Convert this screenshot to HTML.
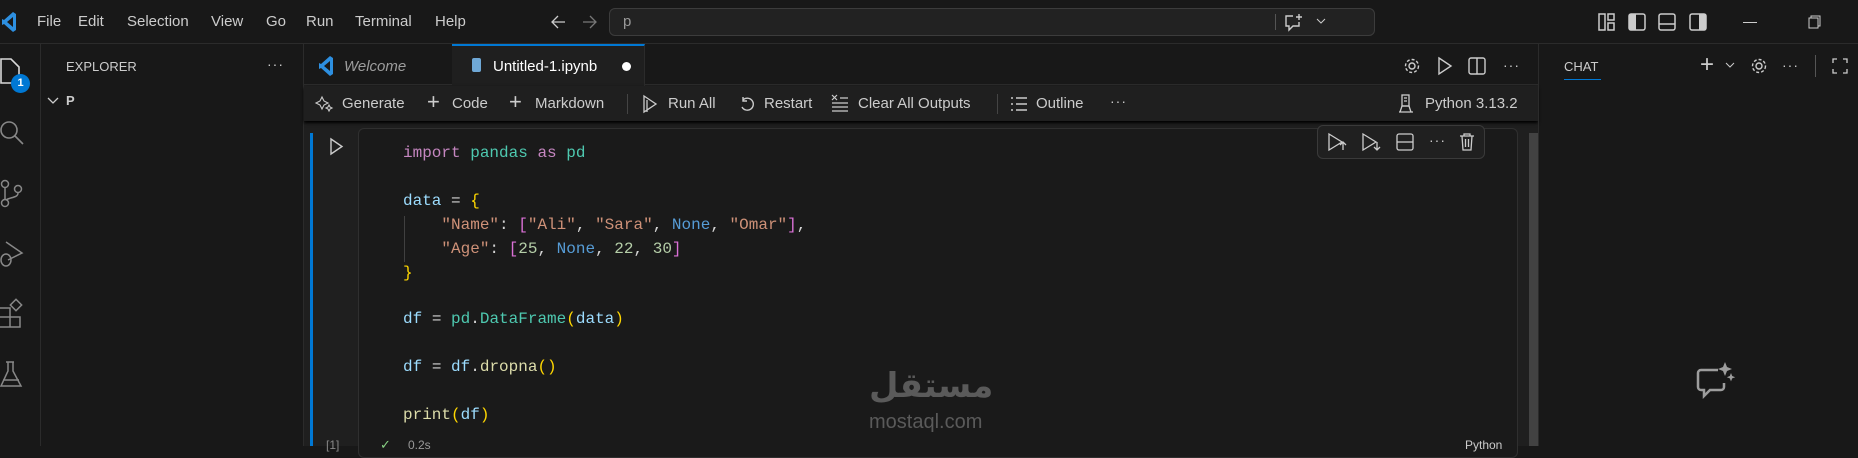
<!DOCTYPE html>
<html><head><meta charset="utf-8">
<style>
*{margin:0;padding:0;box-sizing:border-box}
body{width:1858px;height:446px;overflow:hidden;background:#181818;font-family:"Liberation Sans",sans-serif;color:#ccc;position:relative}
.a{position:absolute;white-space:nowrap}
.ui{font-size:15px;color:#cccccc}
svg{position:absolute;overflow:visible}
.code{font-family:"Liberation Mono",monospace;font-size:16px;color:#9cdcfe;white-space:pre}
.k{color:#c586c0}.m{color:#4ec9b0}.s{color:#ce9178}.n{color:#569cd6}.y{color:#ffd700}.p{color:#da70d6}.f{color:#dcdcaa}.w{color:#d4d4d4}.g{color:#b5cea8}
</style></head><body>
<!-- title bar -->
<div class="a" style="left:0;top:0;width:1858px;height:44px;background:#181818;border-bottom:1px solid #2b2b2b"></div>
<svg style="left:2px;top:12px" width="14" height="20" viewBox="0 0 14 20"><path d="M11 0 L14 2 V18 L11 20 L2 12 L0 13 V7 L2 8 Z M11 5 L5 10 L11 15Z" fill="#2d8fe0"/></svg>
<div class="a ui" style="left:37px;top:13px">File</div>
<div class="a ui" style="left:78px;top:13px">Edit</div>
<div class="a ui" style="left:127px;top:13px">Selection</div>
<div class="a ui" style="left:211px;top:13px">View</div>
<div class="a ui" style="left:266px;top:13px">Go</div>
<div class="a ui" style="left:306px;top:13px">Run</div>
<div class="a ui" style="left:355px;top:13px">Terminal</div>
<div class="a ui" style="left:435px;top:13px">Help</div>
<svg style="left:550px;top:15px" width="16" height="14"><path d="M15 7H2M8 1L2 7l6 6" stroke="#ccc" stroke-width="1.3" fill="none"/></svg>
<svg style="left:582px;top:15px" width="16" height="14"><path d="M1 7h13M8 1l6 6-6 6" stroke="#777" stroke-width="1.3" fill="none"/></svg>
<div class="a" style="left:609px;top:8px;width:766px;height:28px;border:1px solid #3c3c3c;border-radius:6px;background:#222"></div>
<div class="a ui" style="left:623px;top:13px;color:#999">p</div>
<div class="a" style="left:1275px;top:14px;width:1px;height:16px;background:#555"></div>
<svg style="left:1283px;top:13px" width="22" height="20"><path d="M10 3H3v10h3v4l4-4h6V9" stroke="#ccc" stroke-width="1.4" fill="none"/><path d="M16 1v6M13 4h6" stroke="#ccc" stroke-width="1.4"/></svg>
<svg style="left:1316px;top:18px" width="10" height="8"><path d="M1 1l4 4 4-4" stroke="#ccc" fill="none"/></svg>
<svg style="left:1598px;top:13px" width="18" height="18"><rect x="1" y="1" width="6" height="16" fill="none" stroke="#ccc" stroke-width="1.5"/><rect x="10" y="1" width="6" height="6" fill="none" stroke="#ccc" stroke-width="1.5"/><rect x="10" y="10" width="6" height="7" fill="none" stroke="#ccc" stroke-width="1.5"/></svg>
<svg style="left:1628px;top:13px" width="18" height="18"><rect x="1" y="1" width="16" height="16" rx="2" fill="none" stroke="#ccc" stroke-width="1.5"/><rect x="1" y="1" width="7" height="16" fill="#ccc"/></svg>
<svg style="left:1658px;top:13px" width="18" height="18"><rect x="1" y="1" width="16" height="16" rx="2" fill="none" stroke="#ccc" stroke-width="1.5"/><path d="M1 11h16" stroke="#ccc" stroke-width="1.5"/></svg>
<svg style="left:1689px;top:13px" width="18" height="18"><rect x="1" y="1" width="16" height="16" rx="2" fill="none" stroke="#ccc" stroke-width="1.5"/><rect x="10" y="1" width="7" height="16" fill="#ccc"/></svg>
<div class="a" style="left:1743px;top:22px;width:14px;height:1px;background:#ccc"></div>
<svg style="left:1808px;top:15px" width="14" height="14"><rect x="1" y="3" width="9" height="10" fill="none" stroke="#ccc"/><path d="M3 3V1h9v10h-2" fill="none" stroke="#ccc"/></svg>

<!-- activity bar -->
<div class="a" style="left:40px;top:44px;width:1px;height:402px;background:#2b2b2b"></div>
<svg style="left:0;top:58px" width="26" height="28"><path d="M1 1h10l8 8v16H1z" fill="none" stroke="#d7d7d7" stroke-width="1.6"/></svg>
<div class="a" style="left:11px;top:74px;width:19px;height:19px;border-radius:50%;background:#0078d4;color:#fff;font-size:11px;font-weight:bold;text-align:center;line-height:19px">1</div>
<svg style="left:0;top:120px" width="26" height="28"><circle cx="9" cy="10" r="8" fill="none" stroke="#888" stroke-width="1.6"/><path d="M15 16l8 8" stroke="#888" stroke-width="1.6"/></svg>
<svg style="left:0;top:180px" width="26" height="30"><circle cx="5" cy="4" r="3.5" fill="none" stroke="#888" stroke-width="1.5"/><circle cx="5" cy="23" r="3.5" fill="none" stroke="#888" stroke-width="1.5"/><circle cx="18" cy="9" r="3.5" fill="none" stroke="#888" stroke-width="1.5"/><path d="M5 8v11M18 13c0 5-8 4-12 7" stroke="#888" stroke-width="1.5" fill="none"/></svg>
<svg style="left:0;top:240px" width="26" height="30"><path d="M6 2l16 11-14 7" fill="none" stroke="#888" stroke-width="1.5"/><ellipse cx="6" cy="20" rx="5" ry="6" fill="none" stroke="#888" stroke-width="1.5"/></svg>
<svg style="left:0;top:300px" width="26" height="30"><path d="M0 8h10v9h-10M0 17h10v10h-10M10 17h10v10h-10" fill="none" stroke="#888" stroke-width="1.5"/><rect x="12" y="1" width="8" height="8" transform="rotate(45 16 5)" fill="none" stroke="#888" stroke-width="1.5"/></svg>
<svg style="left:0;top:360px" width="26" height="30"><path d="M6 2h8M8 2v9L1 26h20L13 11V2M3 20h16" fill="none" stroke="#888" stroke-width="1.5"/></svg>

<!-- explorer -->
<div class="a" style="left:303px;top:44px;width:1px;height:402px;background:#2b2b2b"></div>
<div class="a" style="left:66px;top:59px;font-size:13px;color:#ccc">EXPLORER</div>
<div class="a" style="left:267px;top:56px;font-size:14px;color:#ccc;letter-spacing:1px">···</div>
<svg style="left:47px;top:97px" width="12" height="8"><path d="M1 1l5 5 5-5" stroke="#ccc" stroke-width="1.3" fill="none"/></svg>
<div class="a" style="left:66px;top:93px;font-size:13px;font-weight:bold;color:#ccc">P</div>

<!-- editor -->
<div class="a" style="left:304px;top:44px;width:1234px;height:402px;background:#1f1f1f"></div>
<div class="a" style="left:304px;top:44px;width:1234px;height:41px;background:#181818;border-bottom:1px solid #2b2b2b"></div>
<div class="a" style="left:452px;top:44px;width:193px;height:42px;background:#1f1f1f;border-top:2px solid #0078d4;border-right:1px solid #2b2b2b"></div>
<svg style="left:318px;top:56px" width="16" height="20" viewBox="0 0 14 20"><path d="M11 0 L14 2 V18 L11 20 L2 12 L0 13 V7 L2 8 Z M11 5 L5 10 L11 15Z" fill="#2d8fe0"/></svg>
<div class="a ui" style="left:344px;top:58px;font-style:italic;color:#9d9d9d">Welcome</div>
<div class="a" style="left:472px;top:58px;width:9px;height:14px;background:#6fa8d6;border-radius:2px"></div>
<div class="a ui" style="left:493px;top:58px;color:#fff">Untitled-1.ipynb</div>
<div class="a" style="left:622px;top:62px;width:9px;height:9px;border-radius:50%;background:#fff"></div>
<svg style="left:1403px;top:57px" width="18" height="18"><circle cx="9" cy="9" r="3" fill="none" stroke="#ccc" stroke-width="1.4"/><circle cx="9" cy="9" r="6.5" fill="none" stroke="#ccc" stroke-width="1.4" stroke-dasharray="3 2"/></svg>
<svg style="left:1438px;top:57px" width="14" height="18"><path d="M1 1l12 8-12 8z" fill="none" stroke="#ccc" stroke-width="1.4"/></svg>
<svg style="left:1468px;top:57px" width="18" height="18"><rect x="1" y="1" width="16" height="16" rx="2" fill="none" stroke="#ccc" stroke-width="1.4"/><path d="M9 1v16" stroke="#ccc" stroke-width="1.4"/></svg>
<div class="a" style="left:1503px;top:57px;font-size:14px;color:#ccc;letter-spacing:1px">···</div>

<!-- notebook toolbar -->
<div class="a" style="left:304px;top:86px;width:1234px;height:35px;background:#1f1f1f;box-shadow:0 2px 3px #000"></div>
<svg style="left:317px;top:96px" width="16" height="16"><path d="M5 1l2 4 4 2-4 2-2 4-2-4-4-2 4-2z M12 9l1 2 2 1-2 1-1 2-1-2-2-1 2-1z" fill="none" stroke="#ccc" stroke-width="1.1"/></svg>
<div class="a ui" style="left:342px;top:95px">Generate</div>
<div class="a" style="left:427px;top:89px;font-size:22px;color:#ccc;font-weight:200">+</div>
<div class="a ui" style="left:452px;top:95px">Code</div>
<div class="a" style="left:509px;top:89px;font-size:22px;color:#ccc;font-weight:200">+</div>
<div class="a ui" style="left:535px;top:95px">Markdown</div>
<div class="a" style="left:627px;top:94px;width:1px;height:20px;background:#444"></div>
<svg style="left:642px;top:95px" width="16" height="18"><path d="M2 1l12 8-12 8z M5 5v12" fill="none" stroke="#ccc" stroke-width="1.3"/></svg>
<div class="a ui" style="left:668px;top:95px">Run All</div>
<svg style="left:739px;top:96px" width="16" height="16"><path d="M4 4a6 6 0 1 1-1 7M4 1v4h4" fill="none" stroke="#ccc" stroke-width="1.4"/></svg>
<div class="a ui" style="left:764px;top:95px">Restart</div>
<svg style="left:831px;top:94px" width="18" height="18"><path d="M1 1l5 5M6 1l-5 5M9 4h8M1 9h16M1 13h16M1 17h16" stroke="#ccc" stroke-width="1.2"/></svg>
<div class="a ui" style="left:858px;top:95px">Clear All Outputs</div>
<div class="a" style="left:997px;top:94px;width:1px;height:20px;background:#444"></div>
<svg style="left:1010px;top:96px" width="18" height="16"><path d="M1 2h2M6 2h11M1 8h2M6 8h11M1 14h2M6 14h11" stroke="#ccc" stroke-width="1.4"/></svg>
<div class="a ui" style="left:1036px;top:95px">Outline</div>
<div class="a" style="left:1110px;top:93px;font-size:14px;color:#ccc;letter-spacing:1px">···</div>
<svg style="left:1398px;top:94px" width="16" height="20"><rect x="4" y="1" width="7" height="11" fill="none" stroke="#ccc" stroke-width="1.3"/><path d="M1 18h14M2 18l2-6h7l2 6M6 4h3M6 7h3" stroke="#ccc" stroke-width="1.3" fill="none"/></svg>
<div class="a ui" style="left:1425px;top:95px">Python 3.13.2</div>

<!-- cell -->
<div class="a" style="left:310px;top:133px;width:3px;height:313px;background:#0078d4"></div>
<svg style="left:330px;top:138px" width="14" height="18"><path d="M1 1l11 7.5L1 16z" fill="none" stroke="#ccc" stroke-width="1.4"/></svg>
<div class="a" style="left:358px;top:128px;width:1160px;height:330px;border:1px solid #2f2f2f;border-radius:6px;background:#1a1a1a"></div>
<div class="a" style="left:404px;top:216px;width:1px;height:46px;background:#404040"></div>
<div class="a" style="left:1317px;top:125px;width:168px;height:34px;border:1px solid #3a3a3a;border-radius:6px;background:#202020"></div>
<svg style="left:1328px;top:133px" width="20" height="18"><path d="M1 1l13 8-13 8z" fill="none" stroke="#ccc" stroke-width="1.3"/><path d="M15 17V9M12 12l3-3 3 3" stroke="#ccc" stroke-width="1.3" fill="none"/></svg>
<svg style="left:1362px;top:133px" width="20" height="18"><path d="M1 1l13 8-13 8z" fill="none" stroke="#ccc" stroke-width="1.3"/><path d="M15 9v8M12 14l3 3 3-3" stroke="#ccc" stroke-width="1.3" fill="none"/></svg>
<svg style="left:1396px;top:133px" width="18" height="18"><rect x="1" y="1" width="16" height="16" rx="2" fill="none" stroke="#ccc" stroke-width="1.3"/><path d="M1 9h16" stroke="#ccc" stroke-width="1.3"/></svg>
<div class="a" style="left:1429px;top:132px;font-size:14px;color:#ccc;letter-spacing:1px">···</div>
<svg style="left:1459px;top:132px" width="16" height="19"><path d="M1 4h14M5 4V2h6v2M3 4l1 14h8l1-14M6.5 7v8M9.5 7v8" stroke="#ccc" stroke-width="1.3" fill="none"/></svg>

<div class="a code" style="left:403px;top:144px"><span class="k">import</span> <span class="m">pandas</span> <span class="k">as</span> <span class="m">pd</span></div>
<div class="a code" style="left:403px;top:192px">data <span class="w">=</span> <span class="y">{</span></div>
<div class="a code" style="left:403px;top:216px">    <span class="s">"Name"</span><span class="w">:</span> <span class="p">[</span><span class="s">"Ali"</span><span class="w">,</span> <span class="s">"Sara"</span><span class="w">,</span> <span class="n">None</span><span class="w">,</span> <span class="s">"Omar"</span><span class="p">]</span><span class="w">,</span></div>
<div class="a code" style="left:403px;top:240px">    <span class="s">"Age"</span><span class="w">:</span> <span class="p">[</span><span class="g">25</span><span class="w">,</span> <span class="n">None</span><span class="w">,</span> <span class="g">22</span><span class="w">,</span> <span class="g">30</span><span class="p">]</span></div>
<div class="a code" style="left:403px;top:264px"><span class="y">}</span></div>
<div class="a code" style="left:403px;top:310px">df <span class="w">=</span> <span class="m">pd</span><span class="w">.</span><span class="m">DataFrame</span><span class="y">(</span>data<span class="y">)</span></div>
<div class="a code" style="left:403px;top:358px">df <span class="w">=</span> df<span class="w">.</span><span class="f">dropna</span><span class="y">()</span></div>
<div class="a code" style="left:403px;top:406px"><span class="f">print</span><span class="y">(</span>df<span class="y">)</span></div>
<div class="a" style="left:326px;top:438px;font-size:12px;color:#888">[1]</div>
<div class="a" style="left:380px;top:437px;font-size:13px;color:#89d185">✓</div>
<div class="a" style="left:408px;top:438px;font-size:12px;color:#999">0.2s</div>
<div class="a" style="left:1465px;top:438px;font-size:12px;color:#ccc">Python</div>

<!-- watermark -->
<div class="a" style="left:869px;top:368px;font-family:'DejaVu Sans',sans-serif;font-size:34px;font-weight:bold;color:#5a5a5a;line-height:36px">مستقل</div>
<div class="a" style="left:869px;top:411px;font-size:20px;color:#5a5a5a">mostaql.com</div>

<!-- scrollbar -->
<div class="a" style="left:1529px;top:133px;width:9px;height:313px;background:#424242"></div>

<!-- chat -->
<div class="a" style="left:1538px;top:44px;width:1px;height:402px;background:#2b2b2b"></div>
<div class="a" style="left:1564px;top:59px;font-size:13px;color:#ccc">CHAT</div>
<div class="a" style="left:1564px;top:79px;width:37px;height:1px;background:#0078d4"></div>
<div class="a" style="left:1700px;top:51px;font-size:24px;color:#ccc;font-weight:200">+</div>
<svg style="left:1725px;top:62px" width="10" height="7"><path d="M1 1l4 4 4-4" stroke="#ccc" fill="none"/></svg>
<svg style="left:1750px;top:57px" width="18" height="18"><circle cx="9" cy="9" r="3" fill="none" stroke="#ccc" stroke-width="1.4"/><circle cx="9" cy="9" r="6.5" fill="none" stroke="#ccc" stroke-width="1.4" stroke-dasharray="3 2"/></svg>
<div class="a" style="left:1782px;top:57px;font-size:14px;color:#ccc;letter-spacing:1px">···</div>
<div class="a" style="left:1815px;top:55px;width:1px;height:22px;background:#555"></div>
<svg style="left:1832px;top:58px" width="16" height="16"><path d="M1 5V1h4M11 1h4v4M15 11v4h-4M5 15H1v-4" stroke="#ccc" stroke-width="1.3" fill="none"/></svg>
<svg style="left:1695px;top:362px" width="40" height="38"><path d="M23 8H6a3 3 0 0 0-3 3v14a3 3 0 0 0 3 3h3v6l6-6h11a3 3 0 0 0 3-3v-4" stroke="#9d9d9d" stroke-width="2.5" fill="none"/><path d="M30 0l2 5 5 2-5 2-2 5-2-5-5-2 5-2z M36 11l1.2 3 3 1.2-3 1.2-1.2 3-1.2-3-3-1.2 3-1.2z" fill="#9d9d9d"/></svg>
</body></html>
